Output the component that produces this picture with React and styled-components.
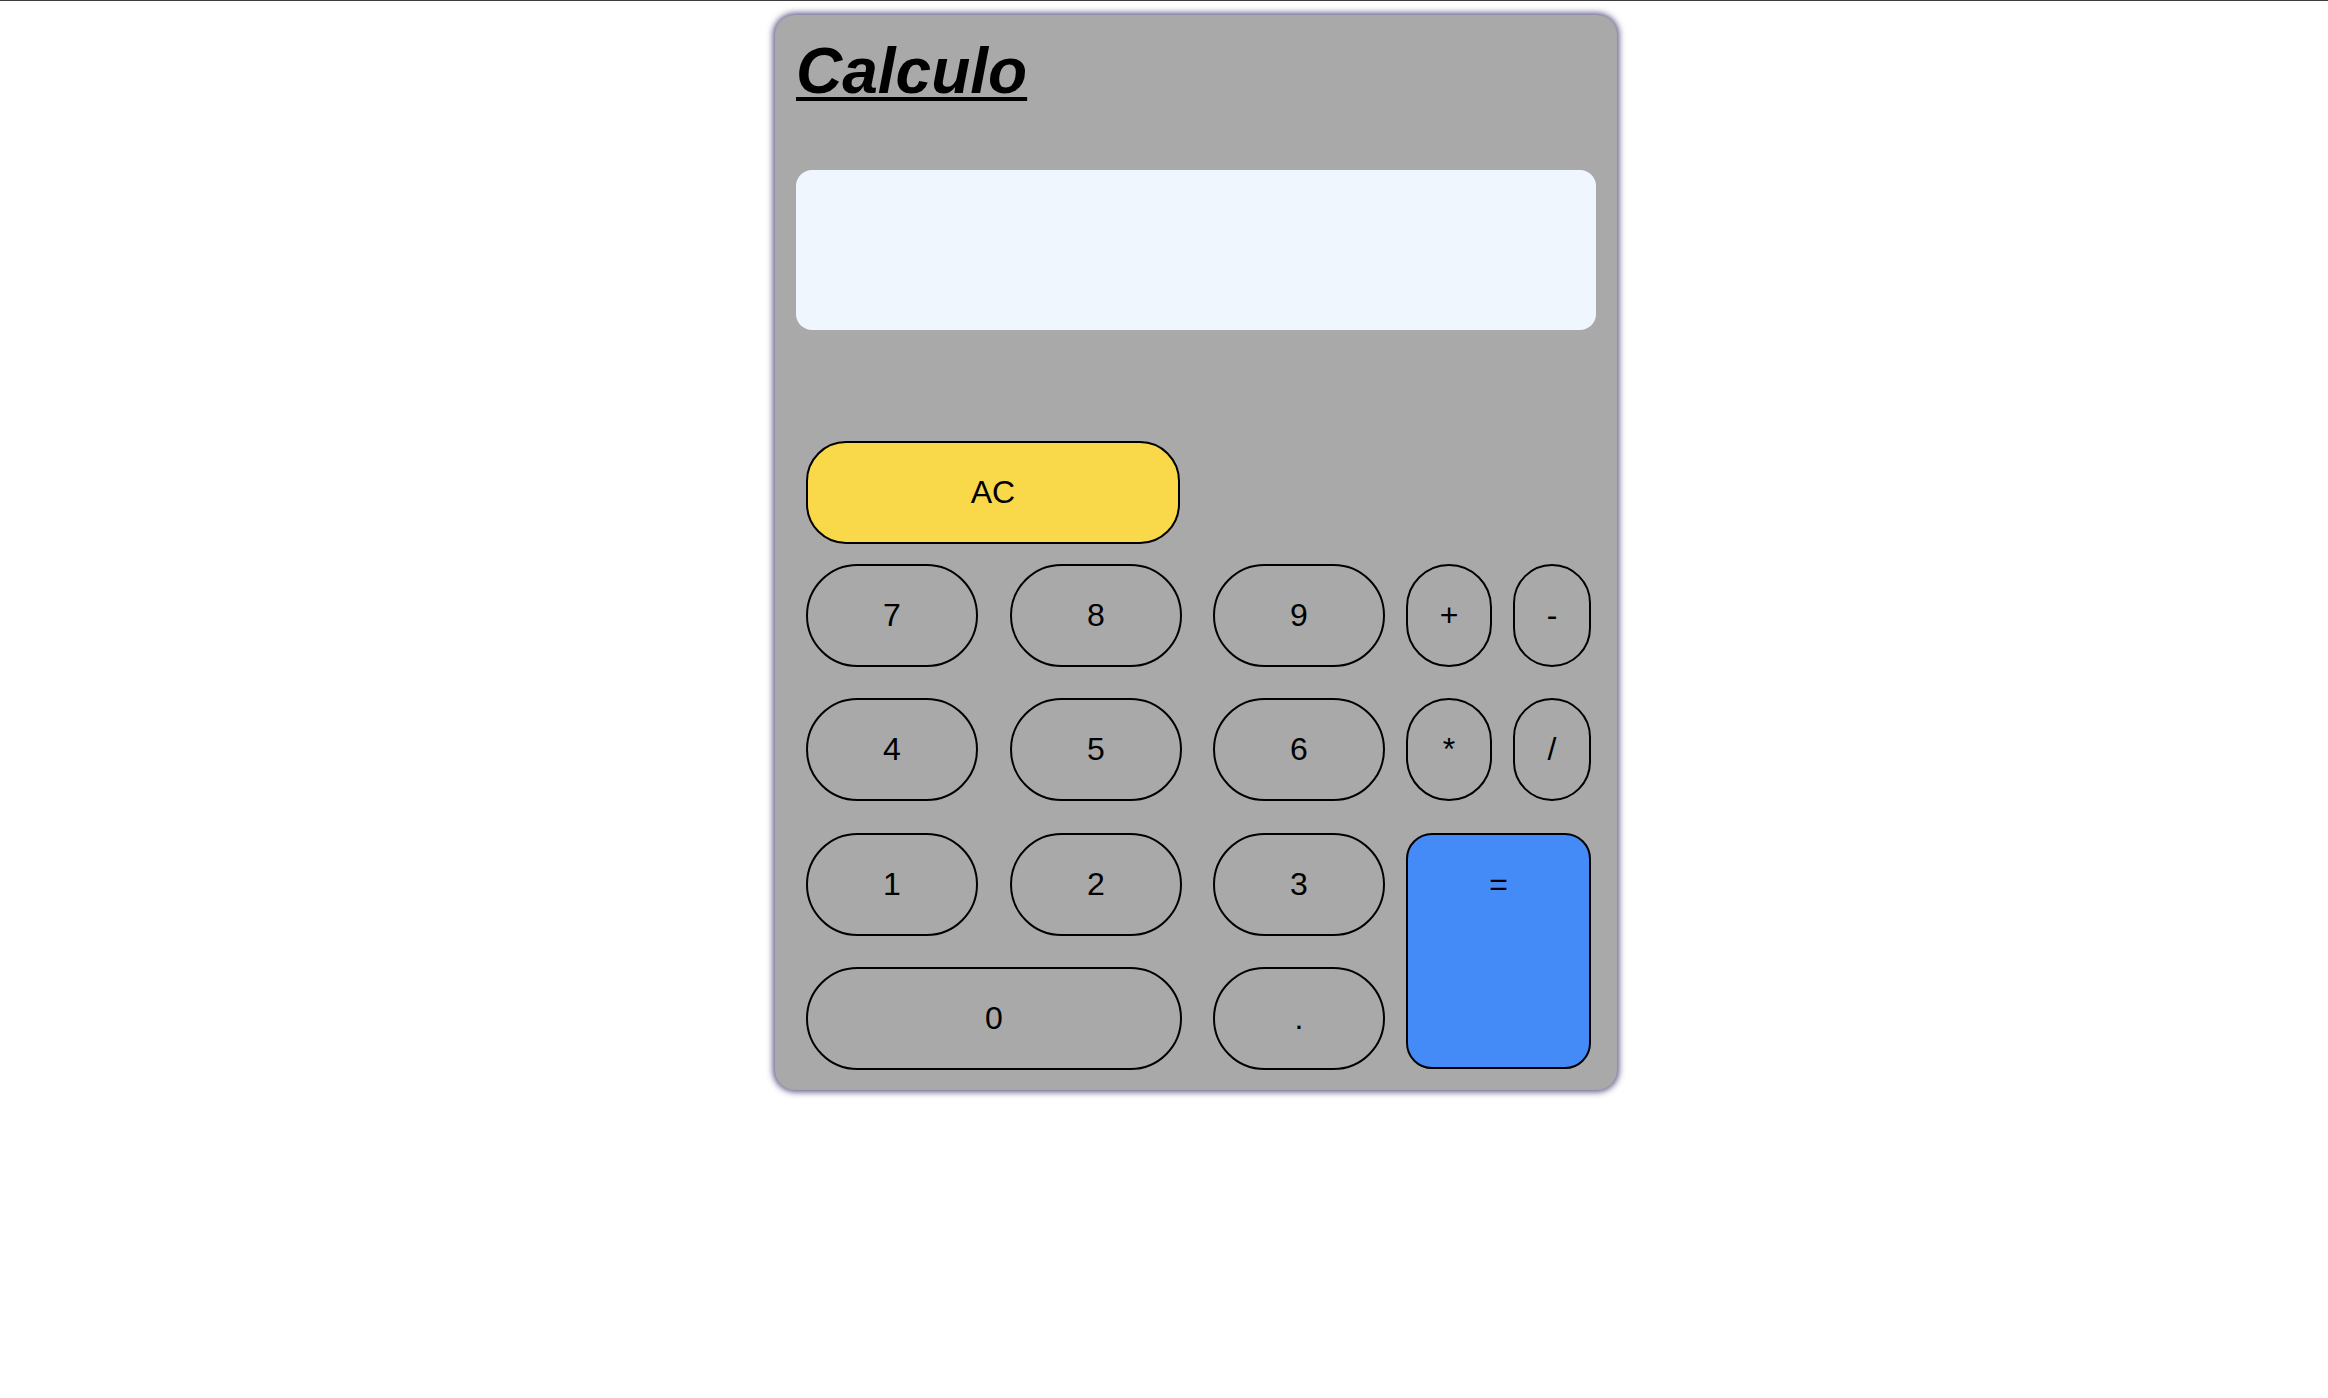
import React, { useState } from "react";
import styled, { createGlobalStyle } from "styled-components";

const GlobalStyle = createGlobalStyle`
  html {
    border-top: 1px solid #3c3c3c;
  }
  body {
    margin: 0;
    background: #ffffff;
    font-family: "Liberation Sans", Arial, Helvetica, sans-serif;
  }
`;

const Page = styled.div`
  min-height: 1397px;
  padding-top: 14px;
  box-sizing: border-box;
`;

const Calculator = styled.div`
  width: 842px;
  box-sizing: border-box;
  margin-left: calc(50% - 389px);
  padding: 20px 21px 20px 21px;
  background-color: #a9a9a9;
  border-radius: 20px;
  box-shadow: 0 0 6px 2px rgba(72, 68, 120, 0.9);
`;

const Title = styled.h1`
  margin: 0;
  font-size: 64px;
  font-weight: 700;
  font-style: italic;
  text-decoration: underline;
  text-decoration-thickness: 4px;
  text-underline-offset: 4px;
  color: #000;
  line-height: 72px;
`;

const Display = styled.div`
  margin-top: 63px;
  height: 160px;
  border-radius: 16px;
  background-color: #eff6fd;
  font-size: 48px;
  display: flex;
  align-items: center;
  justify-content: flex-end;
  padding: 0 24px;
  box-sizing: border-box;
`;

const Keypad = styled.div`
  margin-top: 111px;
  padding-left: 10px;
  display: grid;
  grid-template-columns: 204px 203px 193px 107px 78px;
  grid-template-rows: 123px 134px 135px 134px 103px;
`;

const Key = styled.button`
  grid-column: ${(p) => p.$col || "auto"};
  grid-row: ${(p) => p.$row || "auto"};
  width: ${(p) => p.$w}px;
  height: ${(p) => p.$h || 103}px;
  border: 2px solid #000;
  border-radius: ${(p) => p.$radius || "52px"};
  background-color: ${(p) => p.$bg || "#a9a9a9"};
  color: #000;
  font-family: "Liberation Sans", Arial, Helvetica, sans-serif;
  font-size: 32px;
  padding: 0;
  box-sizing: border-box;
  display: flex;
  justify-content: center;
  align-items: ${(p) => (p.$top ? "flex-start" : "center")};
  padding-top: ${(p) => (p.$top ? "31px" : "0")};
  cursor: pointer;
`;

const keys = [
  { label: "7", col: 1, row: 2, w: 172 },
  { label: "8", col: 2, row: 2, w: 172 },
  { label: "9", col: 3, row: 2, w: 172 },
  { label: "+", col: 4, row: 2, w: 86 },
  { label: "-", col: 5, row: 2, w: 78 },
  { label: "4", col: 1, row: 3, w: 172 },
  { label: "5", col: 2, row: 3, w: 172 },
  { label: "6", col: 3, row: 3, w: 172 },
  { label: "*", col: 4, row: 3, w: 86 },
  { label: "/", col: 5, row: 3, w: 78 },
  { label: "1", col: 1, row: 4, w: 172 },
  { label: "2", col: 2, row: 4, w: 172 },
  { label: "3", col: 3, row: 4, w: 172 },
  { label: "0", col: "1 / span 2", row: 5, w: 376 },
  { label: ".", col: 3, row: 5, w: 172 },
];

const App = () => {
  const [value, setValue] = useState("");

  const press = (k) => setValue((v) => v + k);

  const evaluate = () => {
    try {
      // eslint-disable-next-line no-new-func
      setValue(String(Function(`return (${value})`)()));
    } catch (e) {
      setValue("Error");
    }
  };

  return (
    <Page>
      <GlobalStyle />
      <Calculator>
        <Title>Calculo</Title>
        <Display>{value}</Display>
        <Keypad>
          <Key
            $col="1 / span 2"
            $row={1}
            $w={374}
            $radius="40px"
            $bg="#f9d84a"
            onClick={() => setValue("")}
          >
            AC
          </Key>
          {keys.map((k) => (
            <Key
              key={k.label}
              $col={k.col}
              $row={k.row}
              $w={k.w}
              onClick={() => press(k.label)}
            >
              {k.label}
            </Key>
          ))}
          <Key
            $col="4 / span 2"
            $row="4 / span 2"
            $w={185}
            $h={236}
            $radius="26px"
            $bg="#448bf7"
            $top
            onClick={evaluate}
          >
            =
          </Key>
        </Keypad>
      </Calculator>
    </Page>
  );
};

export default App;
